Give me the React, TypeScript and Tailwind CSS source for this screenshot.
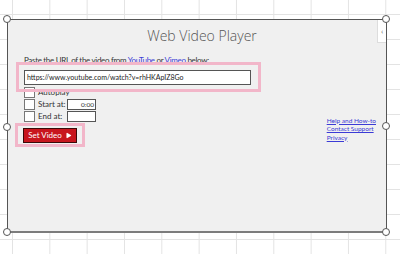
import { Play } from 'lucide-react';

const Handle = ({ className }: { className: string }) => (
  <div className={`absolute w-[8px] h-[8px] rounded-full bg-white border border-[#555] ${className}`} />
);

const Check = () => <div className="w-[11px] h-[11px] bg-white border border-[#777] shrink-0" />;

const App = () => {
  return (
    <div className="relative w-[400px] h-[254px] overflow-hidden bg-white bg-[linear-gradient(to_right,#e3e3e3_1px,transparent_1px),linear-gradient(to_bottom,#e3e3e3_1px,transparent_1px)] bg-[size:37.33px_25px] bg-[position:12px_14px] font-['Lato',sans-serif]">
      <div className="absolute left-[7px] top-[19px] w-[380px] h-[214px] bg-[#f0f0f0] border-t border-l border-r border-[#555] border-b-2 border-b-[#7c7c7c] flex flex-col">
        <div className="absolute right-0 top-0 w-[9px] h-[23px] bg-white border-l border-b border-[#ddd] flex items-center justify-center text-[8px] text-[#666] leading-none">
          ‹
        </div>
        <h1 className="pt-[4px] pl-[10px] text-center text-[14px] font-light text-[#555] leading-[24px] font-['Open_Sans',sans-serif]">
          Web Video Player
        </h1>
        <p className="mt-[6px] pl-[16px] text-[8px] tracking-[-0.32px] text-[#333] leading-[12px] whitespace-nowrap">
          Paste the URL of the video from <span className="text-[#3b3bd6] underline">YouTube</span> or{' '}
          <span className="text-[#3b3bd6] underline">Vimeo</span> below:
        </p>
        <div className="flex justify-between pr-[10px]">
          <div className="flex flex-col">
            <div className="relative z-10 ml-[8px] mt-[-4px] w-[245px] h-[30px] border-[3px] border-[#f2b6c9] flex items-center pl-[5px]">
              <div className="w-[227px] h-[15px] bg-white border border-[#555] text-[7px] leading-[13px] text-[#222] pl-[2px] whitespace-nowrap overflow-hidden">
                https://www.youtube.com/watch?v=rhHKApIZ8Go
              </div>
            </div>
            <div className="flex flex-col gap-[1px] pl-[16px] mt-[-5px] text-[8px] text-[#333] leading-[11px] whitespace-nowrap">
              <div className="flex items-center gap-[3px] h-[11px]">
                <Check />
                <span>Autoplay</span>
              </div>
              <div className="flex items-center gap-[3px] h-[11px]">
                <Check />
                <span className="w-[26px]">Start at:</span>
                <div className="w-[29px] h-[11px] bg-white border border-[#555] text-[6.5px] leading-[9px] text-right pr-[1px]">0:00</div>
              </div>
              <div className="flex items-center gap-[3px] h-[11px]">
                <Check />
                <span className="w-[26px]">End at:</span>
                <div className="w-[29px] h-[11px] bg-white border border-[#555]" />
              </div>
            </div>
            <div className="ml-[7px] mt-[1px] w-[70px] h-[24px] border-[3px] border-[#f2b6c9] flex items-center pl-[5px]">
              <div className="w-[54px] h-[15px] bg-[#c8161e] border border-[#3a0a0a] flex items-center justify-center gap-[3px] text-white text-[8px] leading-none whitespace-nowrap">
                Set Video <Play size={7} fill="white" strokeWidth={0} />
              </div>
            </div>
          </div>
          <div className="flex flex-col self-end mb-[5px] text-[6.5px] leading-[8.5px] text-[#3b3bd6] underline whitespace-nowrap">
            <span>Help and How-to</span>
            <span>Contact Support</span>
            <span>Privacy</span>
          </div>
        </div>
      </div>
      <Handle className="left-[3px] top-[15px]" />
      <Handle className="left-[382px] top-[15px]" />
      <Handle className="left-[3px] top-[123px]" />
      <Handle className="left-[382px] top-[122px]" />
      <Handle className="left-[3px] top-[228px]" />
      <Handle className="left-[382px] top-[228px]" />
    </div>
  );
};

export default App;
